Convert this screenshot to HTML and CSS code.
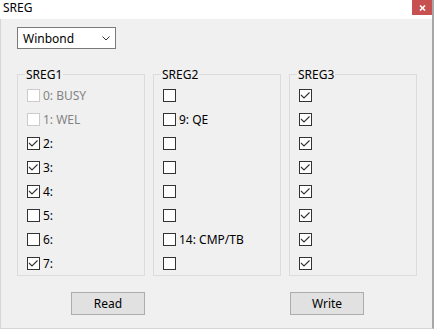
FILE: index.html
```html
<!DOCTYPE html>
<html lang="en">

<head>
    <meta charset="UTF-8">
    <meta name="viewport" content="width=device-width, initial-scale=1.0">
    <title>SREG</title>

    <link rel="stylesheet" href="styles.css">
</head>

<body>
    <div class="window">
        <div class="title_bar">
            <span class="title">SREG</span>
            <button class="close_btn">
                <svg width="7" height="6" viewBox="0 0 7 6">
                    <path d="M1,0.5 L6,5.5 M6,0.5 L1,5.5" stroke="#fff" stroke-width="1.6" fill="none"></path>
                </svg>
            </button>
        </div>

        <div class="content">
            <div class="select">
                <span>Winbond</span>
                <svg width="8" height="5" viewBox="0 0 8 5">
                    <polyline points="0.5,0.5 4,4 7.5,0.5" stroke="#333" stroke-width="1" fill="none"></polyline>
                </svg>
            </div>

            <div class="groups">
                <fieldset class="group">
                    <legend>SREG1</legend>
                    <div class="row disabled"><span class="box"></span><span>0: BUSY</span></div>
                    <div class="row disabled"><span class="box"></span><span>1: WEL</span></div>
                    <div class="row"><span class="box checked"></span><span>2:</span></div>
                    <div class="row"><span class="box checked"></span><span>3:</span></div>
                    <div class="row"><span class="box checked"></span><span>4:</span></div>
                    <div class="row"><span class="box"></span><span>5:</span></div>
                    <div class="row"><span class="box"></span><span>6:</span></div>
                    <div class="row"><span class="box checked"></span><span>7:</span></div>
                </fieldset>

                <fieldset class="group">
                    <legend>SREG2</legend>
                    <div class="row"><span class="box"></span></div>
                    <div class="row"><span class="box"></span><span>9: QE</span></div>
                    <div class="row"><span class="box"></span></div>
                    <div class="row"><span class="box"></span></div>
                    <div class="row"><span class="box"></span></div>
                    <div class="row"><span class="box"></span></div>
                    <div class="row"><span class="box"></span><span>14: CMP/TB</span></div>
                    <div class="row"><span class="box"></span></div>
                </fieldset>

                <fieldset class="group">
                    <legend>SREG3</legend>
                    <div class="row"><span class="box checked"></span></div>
                    <div class="row"><span class="box checked"></span></div>
                    <div class="row"><span class="box checked"></span></div>
                    <div class="row"><span class="box checked"></span></div>
                    <div class="row"><span class="box checked"></span></div>
                    <div class="row"><span class="box checked"></span></div>
                    <div class="row"><span class="box checked"></span></div>
                    <div class="row"><span class="box checked"></span></div>
                </fieldset>
            </div>

            <div class="actions">
                <button class="btn" id="readBtn">Read</button>
                <span></span>
                <button class="btn" id="writeBtn">Write</button>
            </div>
        </div>
    </div>
</body>

</html>
```

FILE: styles.css
```css
* {
    margin: 0;
    padding: 0;
    box-sizing: border-box;
}

body {
    font-family: "Noto Sans", "Open Sans", sans-serif;
    font-size: 12px;
    color: #000;
    background: #f0f0f0;
}

.window {
    width: 434px;
    height: 329px;
    display: flex;
    flex-direction: column;
    border-right: 2px solid #a8a8a8;
    border-bottom: 1px solid #d6d6d6;
    background: #f0f0f0;
}

.title_bar {
    height: 19px;
    display: flex;
    align-items: flex-start;
    justify-content: space-between;
    background: #fff;
}

.title {
    padding-left: 3px;
    line-height: 15px;
}

.close_btn {
    width: 20px;
    height: 15px;
    display: flex;
    align-items: center;
    justify-content: center;
    background: #c75050;
    border: none;
    outline: none;
}

.content {
    flex: 1;
    padding: 8px 0 0 16px;
    border-left: 1px solid #d6d6d6;
}

.select {
    width: 99px;
    height: 22px;
    display: flex;
    align-items: center;
    justify-content: space-between;
    padding: 0 5px 0 5px;
    background: #fff;
    border: 1px solid #7a7a7a;
}

.select svg {
    margin-top: 1px;
}

.groups {
    display: flex;
    gap: 8px;
    margin-top: 18px;
}

.group {
    width: 128px;
    display: flex;
    flex-direction: column;
    gap: 11px;
    padding: 7px 0 5px 9px;
    border: 1px solid #dcdcdc;
}

.group legend {
    margin-left: -2px;
    padding: 0 1px;
    line-height: 15px;
}

.row {
    display: flex;
    align-items: center;
    gap: 3px;
    height: 13px;
    line-height: 13px;
}

.box {
    width: 13px;
    height: 13px;
    flex: none;
    background: #fff;
    border: 1px solid #333;
}

.box.checked {
    background: #fff url("data:image/svg+xml;utf8,<svg xmlns='http://www.w3.org/2000/svg' width='11' height='11'><polyline points='1,5 4,8 9.5,2.5' stroke='%23333' stroke-width='1.1' fill='none'/></svg>") no-repeat center;
}

.row.disabled {
    color: #838383;
}

.row.disabled .box {
    border-color: #cccccc;
}

.actions {
    display: grid;
    grid-template-columns: 128px 128px 128px;
    gap: 8px;
    margin-top: 16px;
}

.btn {
    width: 74px;
    height: 23px;
    font-family: inherit;
    font-size: 12px;
    color: #000;
    background: #e1e1e1;
    border: 1px solid #adadad;
    outline: none;
}

#readBtn {
    justify-self: end;
}

#writeBtn {
    margin-left: 1px;
}
```
